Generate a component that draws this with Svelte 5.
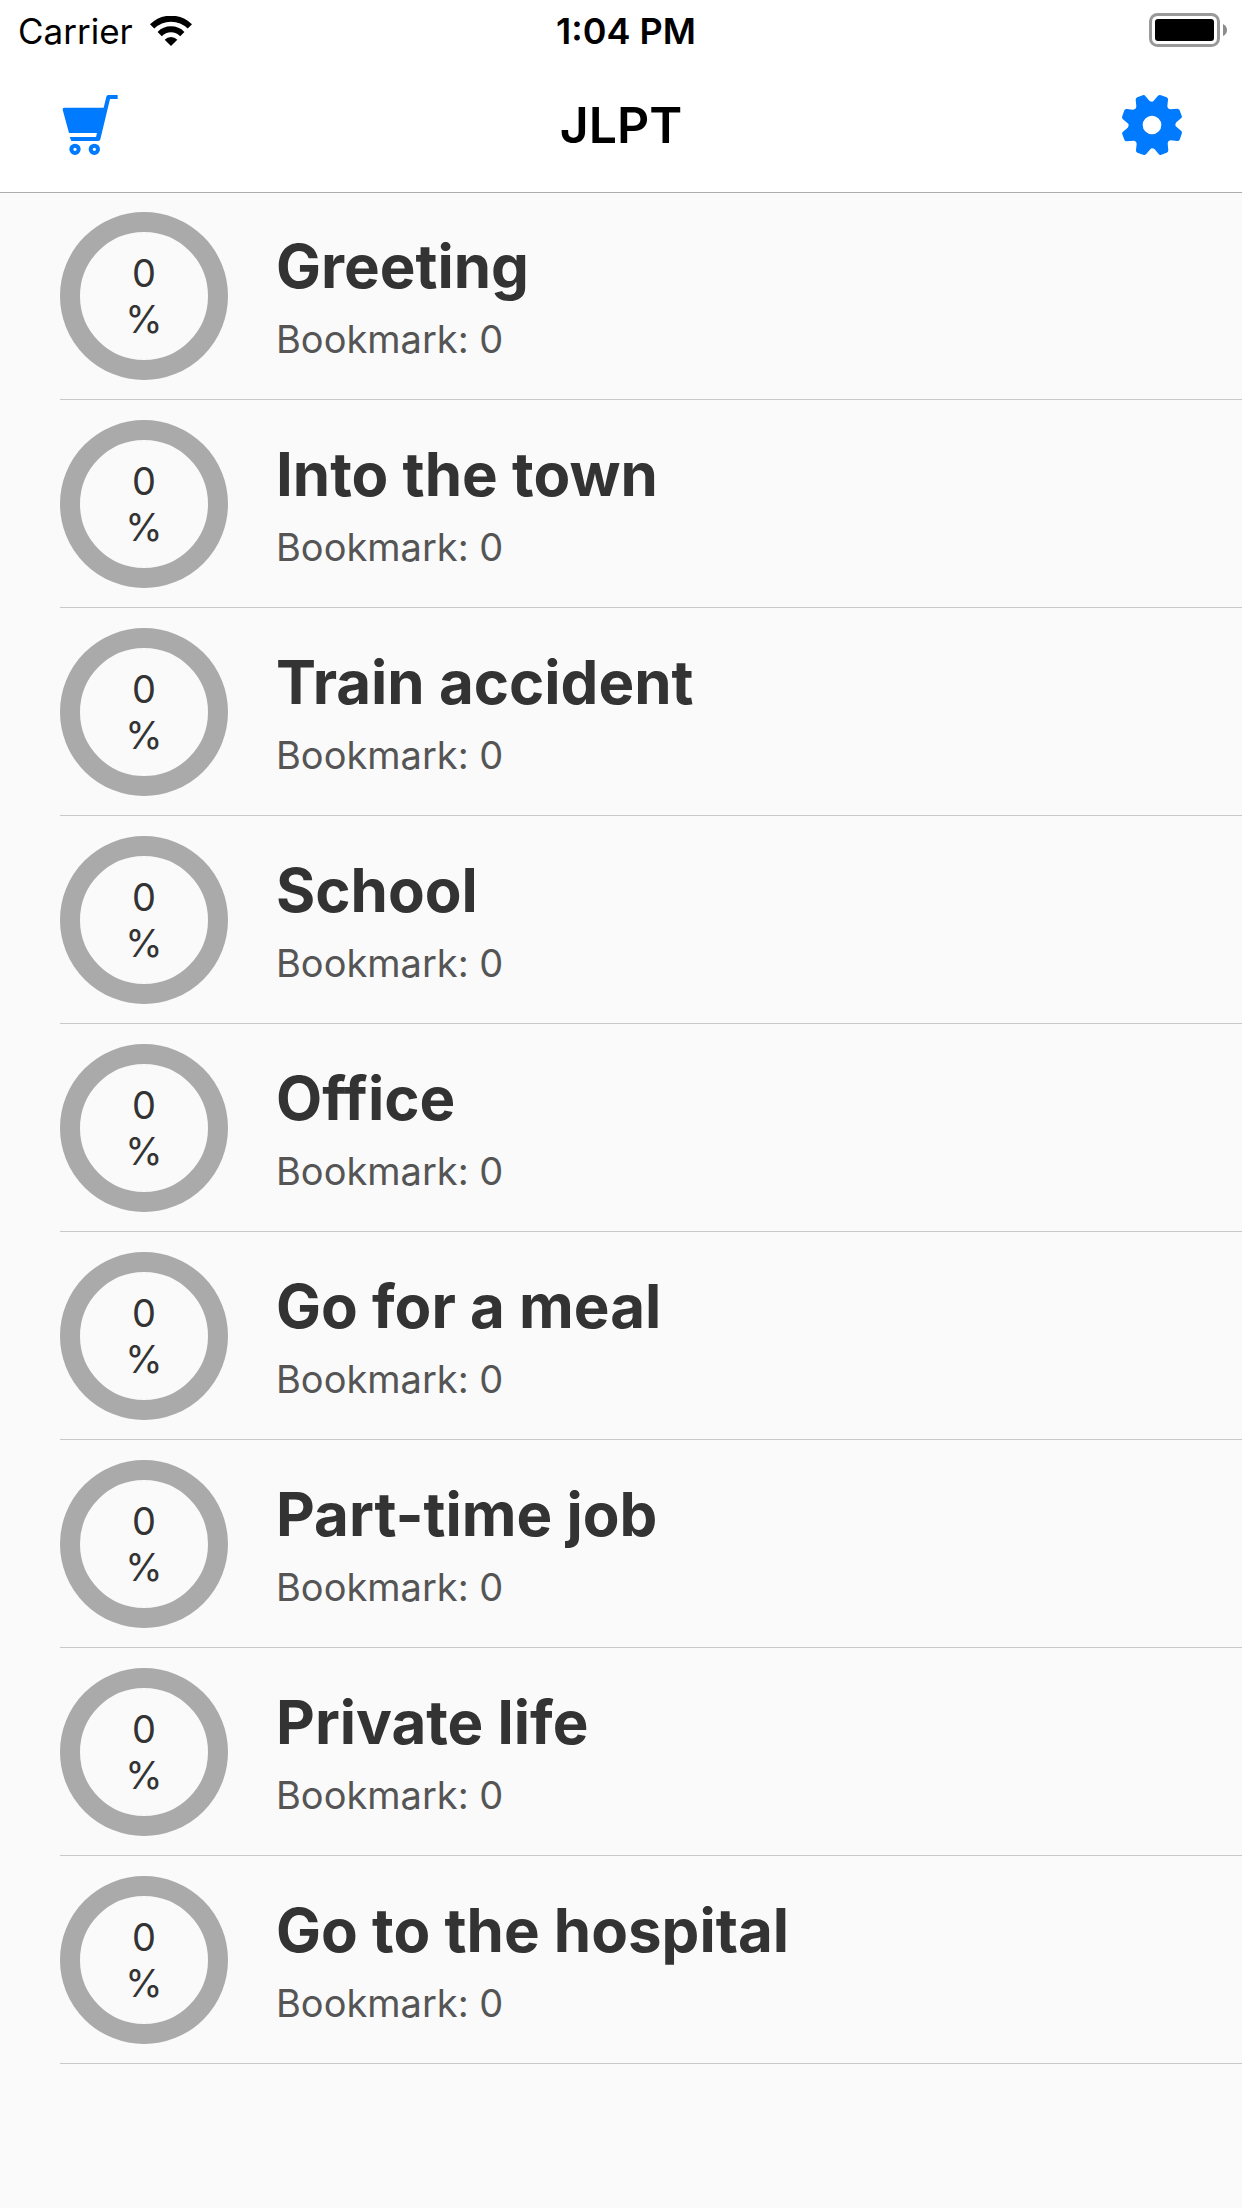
<script>
  const title = "JLPT";

  const lessons = [
    { name: "Greeting", progress: 0, bookmarks: 0 },
    { name: "Into the town", progress: 0, bookmarks: 0 },
    { name: "Train accident", progress: 0, bookmarks: 0 },
    { name: "School", progress: 0, bookmarks: 0 },
    { name: "Office", progress: 0, bookmarks: 0 },
    { name: "Go for a meal", progress: 0, bookmarks: 0 },
    { name: "Part-time job", progress: 0, bookmarks: 0 },
    { name: "Private life", progress: 0, bookmarks: 0 },
    { name: "Go to the hospital", progress: 0, bookmarks: 0 },
  ];

  function slug(name) {
    return name.toLowerCase().replace(/\s+/g, "-");
  }
</script>

<div class="app">
  <header class="top">
    <div class="status-bar">
      <div class="carrier">
        <span>Carrier</span>
        <svg class="wifi" viewBox="450 45 126 90" aria-hidden="true">
          <g fill="none" stroke="#000">
            <path d="M456.4 76.4A80 80 0 0 1 569.6 76.4" stroke-width="18" />
            <path d="M479.1 99.1A48 48 0 0 1 546.9 99.1" stroke-width="18" />
          </g>
          <path d="M513 135L494 116A27 27 0 0 1 532 116Z" />
        </svg>
      </div>
      <time class="clock">1:04 PM</time>
      <svg class="battery" viewBox="0 0 78 34" aria-hidden="true">
        <rect x="1.5" y="1.5" width="68" height="31" rx="7" fill="none" stroke="#999" stroke-width="3" />
        <rect x="6" y="6" width="59" height="22" rx="3" />
        <path d="M74 11Q78 13 78 17T74 23Z" fill="#8c8c8c" />
      </svg>
    </div>

    <nav class="nav-bar">
      <button class="icon-button" type="button" aria-label="Store">
        <svg class="cart" viewBox="186 285 168 180">
          <path d="M353 285V297H330L301 418Q300 423 295 423H214L209 411H288L291 399H207L188 329Q187 323 193 323H311L319 290Q320 285 325 285Z" />
          <g fill="none" stroke="currentColor" stroke-width="12">
            <circle cx="225" cy="448" r="11" />
            <circle cx="283" cy="448" r="11" />
          </g>
        </svg>
      </button>
      <h1>{title}</h1>
      <button class="icon-button" type="button" aria-label="Settings">
        <svg class="gear" viewBox="-90 -90 180 180">
          <path
            fill-rule="evenodd"
            d="M0-70Q3-70 5-73L18-88Q22-91 27-89L44-83Q49-80 48-75L46-57Q46-48 56-47L76-49Q81-49 83-44L89-28Q91-23 87-20L73-8Q70-4 70 0
            Q70 3 73 5L88 18Q91 22 89 27L83 44Q80 49 75 48L57 46Q48 46 47 56L49 76Q49 81 44 83L28 89Q23 91 20 87L8 73Q4 70 0 70
            Q-3 70-5 73L-18 88Q-22 91-27 89L-44 83Q-49 80-48 75L-46 57Q-46 48-56 47L-76 49Q-81 49-83 44L-89 28Q-91 23-87 20L-73 8Q-70 4-70 0
            Q-70-3-73-5L-88-18Q-91-22-89-27L-83-44Q-80-49-75-48L-57-46Q-48-46-47-56L-49-76Q-49-81-44-83L-28-89Q-23-91-20-87L-8-73Q-4-70 0-70Z
            M28 0A28 28 0 1 0-28 0A28 28 0 1 0 28 0Z"
          />
        </svg>
      </button>
    </nav>
  </header>

  <main>
    <ul class="lessons">
      {#each lessons as lesson}
        <li>
          <a class="lesson" href="#{slug(lesson.name)}">
            <span class="ring">
              <span>{lesson.progress}</span>
              <span>%</span>
            </span>
            <span class="lesson-info">
              <span class="lesson-name">{lesson.name}</span>
              <span class="lesson-bookmarks">Bookmark: {lesson.bookmarks}</span>
            </span>
          </a>
        </li>
      {/each}
    </ul>
  </main>
</div>

<style>
  :global(body) {
    background: #fafafa;
  }

  .app {
    font-family: Inter, "Liberation Sans", sans-serif;
    color: #333;
  }

  .top {
    position: relative;
    background: #fff;
    color: #000;
    box-shadow: 0 1px 0 #acacac;
  }

  .status-bar {
    display: grid;
    grid-template-columns: 1fr auto 1fr;
    align-items: center;
    height: 60px;
    padding: 0 8px 0 18px;
    font-size: 35px;
  }

  .carrier {
    display: flex;
    align-items: center;
    gap: 17px;
    padding-top: 2px;
  }

  .wifi {
    width: 42px;
    height: 30px;
  }

  .clock {
    padding-top: 2px;
    font-size: 36px;
    font-weight: 600;
  }

  .battery {
    justify-self: end;
    width: 78px;
    height: 34px;
    margin-right: 7px;
  }

  .nav-bar {
    display: flex;
    justify-content: space-between;
    align-items: center;
    box-sizing: border-box;
    height: 132px;
    padding: 0 60px 2px;
  }

  h1 {
    margin: 0;
    font-size: 50px;
    font-weight: 600;
  }

  .icon-button {
    display: flex;
    width: 60px;
    height: 60px;
    padding: 0;
    border: 0;
    background: none;
    color: #007aff;
    cursor: pointer;
  }

  .icon-button svg {
    height: 60px;
    fill: currentColor;
  }

  .cart,
  .gear {
    width: 60px;
  }

  .lessons {
    margin: 0;
    padding: 0 0 0 60px;
    list-style: none;
  }

  .lesson {
    display: flex;
    align-items: center;
    gap: 48px;
    padding: 20px 0 19px;
    border-bottom: 1px solid #c8c7cc;
    color: inherit;
    text-decoration: none;
  }

  .ring {
    display: flex;
    flex-direction: column;
    align-items: center;
    justify-content: center;
    flex-shrink: 0;
    box-sizing: border-box;
    width: 168px;
    height: 168px;
    border: 20px solid #aaa;
    border-radius: 50%;
    font-size: 38px;
    line-height: 46px;
  }

  .lesson-info {
    display: flex;
    flex-direction: column;
    gap: 8px;
    padding-top: 6px;
  }

  .lesson-name {
    font-size: 60px;
    font-weight: 700;
    line-height: 72px;
  }

  .lesson-bookmarks {
    font-size: 38px;
    line-height: 58px;
    color: #555;
  }
</style>
